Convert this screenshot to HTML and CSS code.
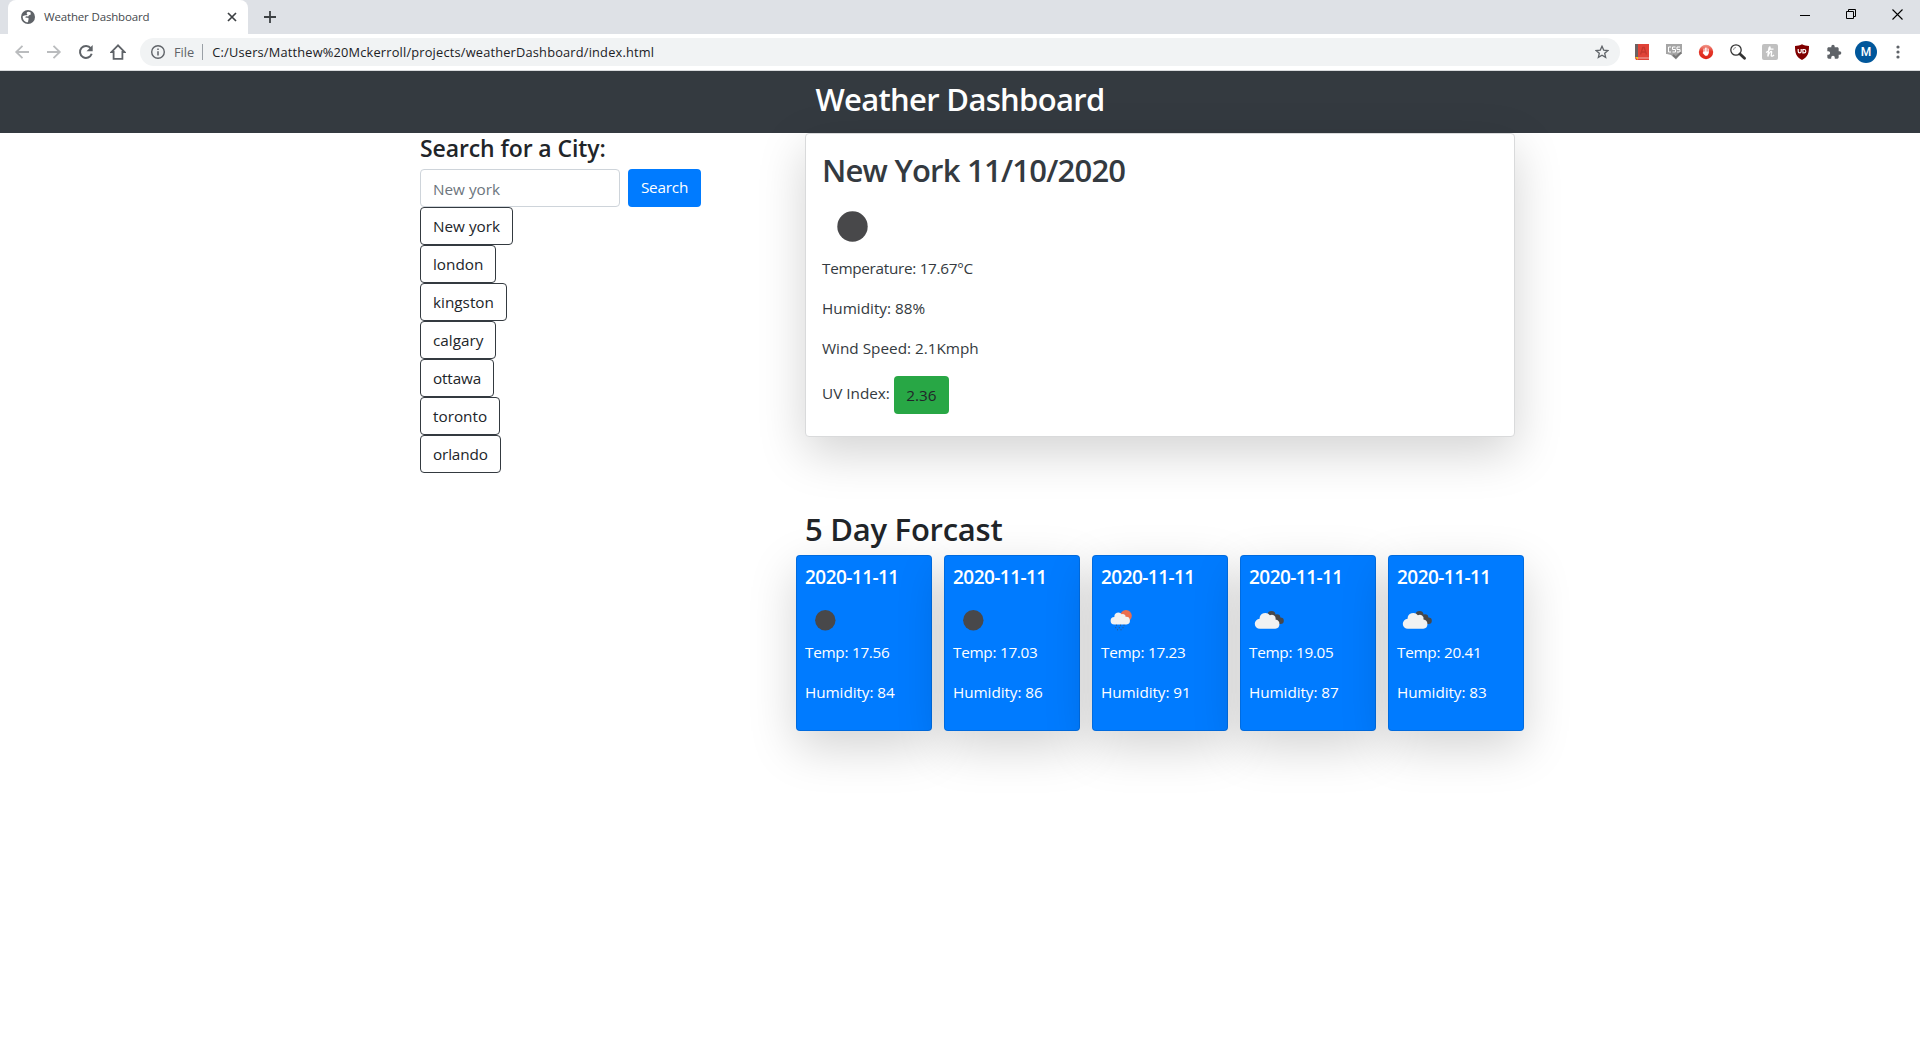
FILE: index.html
```
<!DOCTYPE html>
<html lang="en">
<head>
<meta charset="utf-8">
<title>Weather Dashboard</title>
<link rel="stylesheet" href="styles.css">
</head>
<body>
<div class="browser">
  <div class="tabstrip">
    <div class="tab">
      <svg class="globe" width="14" height="14" viewBox="0 0 14 14"><circle cx="7" cy="7" r="7" fill="#5f6368"/><path d="M7.300 1.700C5.800 2 5.300 3 5.500 4L3.800 5.200 1.700 6.200C1.500 9.800 4 12.300 7 12.300L7.200 10.800 9 9.500 8.300 8 6 7.800 4.200 7.400 5 6.200 7.200 6.400 8 5.200 9.800 4.400 9.500 2.300Z" fill="#fff"/><path d="M4.500 2.500 6.500 4.600 5.500 5.300 3.200 5.200zM7.500 7.300 9.500 8l1.800-.3L10 10.500 7.500 11z" fill="#5f6368"/></svg>
      <span class="tab-title">Weather Dashboard</span>
      <svg class="tab-close" width="10" height="10" viewBox="0 0 10 10"><path d="M1 1l8 8M9 1l-8 8" stroke="#3c4043" stroke-width="1.7"/></svg>
    </div>
    <svg class="new-tab" width="12" height="12" viewBox="0 0 12 12"><path d="M6 0v12M0 6h12" stroke="#3c4043" stroke-width="1.8"/></svg>
    <div class="window-controls">
      <svg width="11" height="11" viewBox="0 0 11 11"><path d="M0 6.500h10" stroke="#000"/></svg>
      <svg width="11" height="11" viewBox="0 0 11 11"><path d="M.5 2.500h7v7h-7zM2.500 2V.5h7v7H8" fill="none" stroke="#000"/></svg>
      <svg width="11" height="11" viewBox="0 0 11 11"><path d="M.5.5l10 10M10.500.5l-10 10" stroke="#000" stroke-width="1.100"/></svg>
    </div>
  </div>
  <div class="toolbar">
    <div class="nav-icons">
      <svg width="16" height="16" viewBox="0 0 16 16"><path d="M15 8H2.500M8.500 1.800 2.200 8l6.300 6.200" fill="none" stroke="#babcbe" stroke-width="1.800"/></svg>
      <svg width="16" height="16" viewBox="0 0 16 16"><path d="M1 8h12.500M7.500 1.800 13.800 8l-6.300 6.200" fill="none" stroke="#babcbe" stroke-width="1.800"/></svg>
      <svg width="16" height="16" viewBox="0 0 16 16"><path d="M12.800 4.300A6 6 0 1 0 13.700 9.800" fill="none" stroke="#5f6368" stroke-width="2"/><path d="M14.700 1v6.200H8.500z" fill="#5f6368"/></svg>
      <svg width="16" height="16" viewBox="0 0 16 16"><path d="M8 1.300 1.400 8H3.600v6.900h8.800V8h2.200z" fill="none" stroke="#5f6368" stroke-width="1.800"/></svg>
    </div>
    <div class="omnibox">
      <svg width="14" height="14" viewBox="0 0 14 14"><circle cx="7" cy="7" r="6.300" fill="none" stroke="#5f6368" stroke-width="1.400"/><path d="M7 6.200v4.300M7 3.500v1.500" stroke="#5f6368" stroke-width="1.500"/></svg>
      <span class="scheme">File</span>
      <span class="divider"></span>
      <span class="url">C:/Users/Matthew%20Mckerroll/projects/weatherDashboard/index.html</span>
      <svg class="star" width="14" height="14" viewBox="0 0 14 14"><path d="M7 1.300 8.700 5.100l4.200.4-3.200 2.800.95 4.100L7 10.200l-3.650 2.200.95-4.100L1.100 5.500l4.200-.4z" fill="none" stroke="#5f6368" stroke-width="1.300"/></svg>
    </div>
    <div class="extensions">
      <svg width="16" height="16" viewBox="0 0 16 16"><path d="M1 0h14v16H2l-1-2z" fill="#e04338"/><path d="M1 0h3v13H1z" fill="#6d6262"/><path d="M4 14h11" stroke="#fff" stroke-opacity=".6"/><path d="m6.500 10.500 2.300-7h1.400l2.300 7M7.500 8h4" fill="none" stroke="#c4372d" stroke-width="1.300"/><path d="M1 13h3v3z" fill="#f3c11f"/></svg>
      <svg width="16" height="16" viewBox="0 0 16 16"><path d="M0 0h16v10H0z" fill="#a5a5a5"/><path d="M1 10h14l-2 2-3 3.500L5 11z" fill="#a0a0a0"/><path d="M5 3H2.500v5H5M9.500 3h-3v2.500h3V8h-3M14 3h-3v2.500h3V8h-3" fill="none" stroke="#fff"/><path d="m7 11 2.800 2.500L15 8.500" fill="none" stroke="#777" stroke-width="1.800"/></svg>
      <svg width="16" height="16" viewBox="0 0 16 16"><defs><linearGradient id="stop" x2="0" y2="1"><stop stop-color="#f1998c"/><stop offset=".45" stop-color="#e5382b"/><stop offset="1" stop-color="#dc2417"/></linearGradient></defs><circle cx="8" cy="8" r="7.200" fill="url(#stop)"/><path d="M6 8V5M7.400 8V4M8.800 8V4M10.200 8.500V5" stroke="#fff" stroke-linecap="round"/><path d="M5.600 7.500h5v2.300l-1.300 2H7.200L4.600 9z" fill="#fff"/></svg>
      <svg width="16" height="16" viewBox="0 0 16 16"><circle cx="6" cy="6" r="5.200" fill="#fff" stroke="#333" stroke-width="1.300"/><path d="M3.500 6A2.500 2.500 0 0 1 6 3.500" fill="none" stroke="#999"/><path d="m10 10 4.500 4.300" stroke="#333" stroke-width="2.800" stroke-linecap="round"/></svg>
      <svg width="16" height="16" viewBox="0 0 16 16"><rect width="16" height="16" rx="2" fill="#c0c0c0"/><path d="M4 8.500C7 7 8.500 4.500 8 3 7 2.500 6.500 6 5.800 12.500 7 8 9.500 6.500 9.700 8L9.200 11.500C9.500 12.800 11 12 12 10.800M7 5.200h4.500" fill="none" stroke="#fff" stroke-width="1.300"/></svg>
      <svg width="16" height="16" viewBox="0 0 16 16"><path d="M8 .3C10 1.600 12.500 2 15 2c0 7-1 11-7 14C2 13 1 9 1 2c2.500 0 5-.4 7-1.700z" fill="#800000"/><path d="M4.200 5v2.300c0 2.200 3 2.200 3 0V5M8.900 5.500v3.300h1.200c2.300 0 2.300-3.300 0-3.300z" fill="none" stroke="#fff" stroke-width="1.200"/></svg>
      <svg width="16" height="16" viewBox="0 0 24 24"><path d="M20.500 11H19V7c0-1.100-.9-2-2-2h-4V3.500a2.500 2.500 0 0 0-5 0V5H4c-1.100 0-2 .9-2 2v3.800h1.500a2.700 2.700 0 0 1 0 5.400H2V20c0 1.100.9 2 2 2h3.800v-1.500a2.700 2.700 0 0 1 5.400 0V22H17c1.100 0 2-.9 2-2v-4h1.500a2.500 2.500 0 0 0 0-5z" fill="#5f6368"/></svg>
      <span class="avatar">M</span>
      <svg class="kebab" width="4" height="14" viewBox="0 0 4 14"><circle cx="2" cy="2" r="1.600" fill="#5f6368"/><circle cx="2" cy="7" r="1.600" fill="#5f6368"/><circle cx="2" cy="12" r="1.600" fill="#5f6368"/></svg>
    </div>
  </div>
</div>

<header class="page-header"><h1>Weather Dashboard</h1></header>

<main class="container">
  <aside class="search">
    <h2>Search for a City:</h2>
    <form class="search-form">
      <input class="city-input" type="text" placeholder="New york">
      <button class="search-btn" type="button">Search</button>
    </form>
    <div class="history">
      <button type="button" class="city">New york</button>
      <button type="button" class="city">london</button>
      <button type="button" class="city">kingston</button>
      <button type="button" class="city">calgary</button>
      <button type="button" class="city tight">ottawa</button>
      <button type="button" class="city">toronto</button>
      <button type="button" class="city tight">orlando</button>
    </div>
  </aside>
  <div class="results">
    <section class="current">
      <h2>New York 11/10/2020</h2>
      <svg class="weather-icon" width="60" height="60" viewBox="0 0 60 60"><circle cx="30.500" cy="30.500" r="15.200" fill="#48484a"/></svg>
      <p class="temperature">Temperature: 17.67°C</p>
      <p>Humidity: 88%</p>
      <p>Wind Speed: 2.1Kmph</p>
      <p class="uv"><span class="uv-label">UV Index:</span><span class="uv-badge">2.36</span></p>
    </section>
    <section class="forecast">
      <h2>5 Day Forcast</h2>
      <div class="days">
        <article class="day"><h3>2020-11-11</h3>
          <svg width="40" height="40" viewBox="0 0 40 40"><circle cx="20.300" cy="20.300" r="10.200" fill="#48484a"/></svg>
          <p class="temp">Temp: 17.56</p><p>Humidity: 84</p></article>
        <article class="day"><h3>2020-11-11</h3>
          <svg width="40" height="40" viewBox="0 0 40 40"><circle cx="20.300" cy="20.300" r="10.200" fill="#48484a"/></svg>
          <p class="temp">Temp: 17.03</p><p>Humidity: 86</p></article>
        <article class="day"><h3>2020-11-11</h3>
          <svg width="40" height="40" viewBox="0 0 40 40"><circle cx="25" cy="15.800" r="5.800" fill="#ec6e4c"/><path d="M13.200 24.500a3.700 3.700 0 0 1 .2-7.400 4 4 0 0 1 7.300-2.800 2.800 2.800 0 0 1 4 2.600 3.800 3.800 0 0 1 .8 7.600z" fill="#f2f2f2"/><path d="M15 25.200h1M19 25.200h1M22.500 25.200h1M14.200 27.700h1M17.800 27.700h1M21.500 27.700h1M16 29.800h1M19.500 29.800h1" stroke="#48484a" stroke-opacity=".75"/></svg>
          <p class="temp">Temp: 17.23</p><p>Humidity: 91</p></article>
        <article class="day"><h3>2020-11-11</h3>
          <svg width="40" height="40" viewBox="0 0 40 40"><g fill="#48484a"><circle cx="22.500" cy="15" r="4"/><circle cx="28" cy="17.500" r="3.300"/><circle cx="31.500" cy="20.700" r="3.300"/><path d="M20 15h7l5 9H24z"/></g><path d="M11 28.800a5 5 0 0 1-.4-10 5.700 5.700 0 0 1 10.300-3.500 3.800 3.800 0 0 1 5.600 4.200 4.700 4.700 0 0 1-.2 9.300z" fill="#f2f2f2"/></svg>
          <p class="temp">Temp: 19.05</p><p>Humidity: 87</p></article>
        <article class="day"><h3>2020-11-11</h3>
          <svg width="40" height="40" viewBox="0 0 40 40"><g fill="#48484a"><circle cx="22.500" cy="15" r="4"/><circle cx="28" cy="17.500" r="3.300"/><circle cx="31.500" cy="20.700" r="3.300"/><path d="M20 15h7l5 9H24z"/></g><path d="M11 28.800a5 5 0 0 1-.4-10 5.700 5.700 0 0 1 10.300-3.500 3.800 3.800 0 0 1 5.600 4.200 4.700 4.700 0 0 1-.2 9.300z" fill="#f2f2f2"/></svg>
          <p class="temp">Temp: 20.41</p><p>Humidity: 83</p></article>
      </div>
    </section>
  </div>
</main>
</body>
</html>
```
FILE: styles.css
```
* { box-sizing: border-box; }
body { margin: 0; min-height: 100vh; background: #fff; color: #212529; font: 15.3px/24px "Open Sans", "Noto Sans", sans-serif; }
svg { display: block; flex: none; }
h1, h2, h3, p { margin: 0; }
h1, h2, h3 { font-weight: 600; white-space: nowrap; }
h2 { font-weight: 550; }
button, input { font: inherit; color: inherit; }

/* Browser window */
.browser { height: 71px; background: #fff; border-bottom: 1px solid #d8dadd; }
.tabstrip { height: 34px; background: #dee1e6; display: flex; align-items: center; padding-left: 8px; }
.tab { width: 240px; height: 34px; background: #fff; border-radius: 8px 8px 0 0; display: flex; align-items: center; padding: 0 11px 0 13px; }
.tab-title { margin-left: 9px; font-size: 11.5px; letter-spacing: -.16px; color: #45494d; flex: 1; white-space: nowrap; }
.new-tab { margin-left: 16px; }
.window-controls { margin-left: auto; margin-right: 17px; display: flex; gap: 35px; padding-bottom: 6px; }
.toolbar { height: 36px; display: flex; align-items: center; }
.nav-icons { display: flex; gap: 16px; margin-left: 14px; width: 126px; }
.omnibox { width: 1480px; height: 28px; background: #f1f3f4; border-radius: 14px; display: flex; align-items: center; padding: 0 11px; font-size: 12.8px; color: #202124; }
.scheme { margin-left: 9px; color: #5f6368; }
.divider { width: 1px; height: 16px; background: #9aa0a6; margin: 0 9px 0 8px; }
.url { letter-spacing: .19px; }
.star { margin-left: auto; }
.extensions { display: flex; align-items: center; gap: 16px; margin-left: 14px; }
.avatar { width: 22px; height: 22px; border-radius: 50%; background: #01579b; color: #fff; font: 500 12px/22px Roboto, sans-serif; text-align: center; margin-left: -3px; }
.kebab { margin-left: 3px; }

/* Page */
.page-header { height: 62px; background: #343a40; color: #fff; text-align: center; }
.page-header h1 { font-size: 31px; line-height: 38px; padding-top: 9px; letter-spacing: -.68px; }

.container { width: 1140px; margin: 0 auto; padding: 0 15px; display: flex; }
.search { width: 400px; padding: 0 15px; }
.search h2 { font-size: 23px; line-height: 29px; height: 36px; padding-top: 1px; letter-spacing: -.1px; }
.search-form { display: flex; gap: 8px; }
.city-input { width: 200px; height: 38px; border: 1px solid #ced4da; border-radius: 4px; padding: 1px 12px 0; background: #fff; }
.city-input::placeholder { color: #6c757d; opacity: 1; }
.search-btn { width: 73px; height: 38px; border: 0; border-radius: 4px; background: #007bff; color: #fff; padding: 0 0 2px; letter-spacing: -.2px; }
.history { display: flex; flex-direction: column; align-items: flex-start; }
.city { height: 38px; border: 1px solid #343a40; border-radius: 4px; background: #fff; padding: 0 12px; }
.city.tight { letter-spacing: -.15px; }

.results { width: 710px; }
.current { position: relative; height: 304px; border: 1px solid #d9dadb; border-radius: 4px; background: #fff; padding: 16px; color: #343a40; box-shadow: 0 16px 48px rgba(0, 0, 0, .175); }
.current h2 { font-size: 31px; line-height: 38px; height: 46px; padding-top: 1px; letter-spacing: -.77px; }
.current p { height: 40px; }
.current .temperature { letter-spacing: -.3px; }
.current .uv { display: flex; align-items: center; height: 38px; }
.uv-label { padding-bottom: 4px; }
.uv-badge { width: 55px; height: 38px; line-height: 38px; margin-left: 4px; border-radius: 4px; background: #28a745; color: #212529; text-align: center; }
.forecast { margin-top: 72px; }
.forecast h2 { font-size: 31px; line-height: 38px; height: 46px; padding-top: 1px; letter-spacing: -.25px; }
.days { display: flex; gap: 12px; margin: 0 -9px; }
.day { position: relative; width: 136px; height: 176px; border: 1px solid rgba(0, 0, 0, .125); border-radius: 4px; background: #007bff; color: #fff; padding: 8px; box-shadow: 0 16px 48px rgba(0, 0, 0, .175); }
.day h3 { font-size: 19px; line-height: 24px; height: 36px; padding-top: 1px; letter-spacing: -.55px; }
.day p { height: 40px; letter-spacing: -.07px; }
.day .temp { letter-spacing: -.27px; }
```
